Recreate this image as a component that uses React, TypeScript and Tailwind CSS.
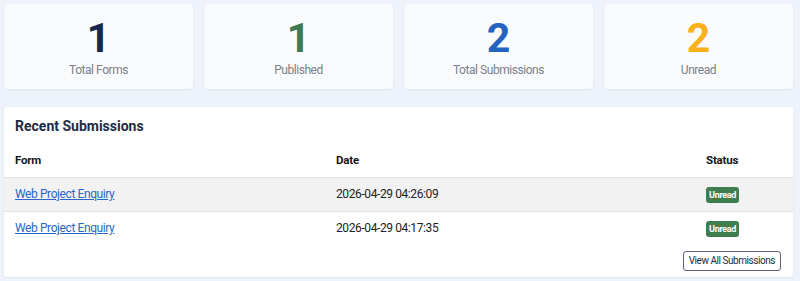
const stats = [
  { value: "1", label: "Total Forms", color: "text-[#14294b]" },
  { value: "1", label: "Published", color: "text-[#3d7a52]" },
  { value: "2", label: "Total Submissions", color: "text-[#2463bf]" },
  { value: "2", label: "Unread", color: "text-[#f9b11b]" },
];

const submissions = [
  { form: "Web Project Enquiry", date: "2026-04-29 04:26:09", status: "Unread" },
  { form: "Web Project Enquiry", date: "2026-04-29 04:17:35", status: "Unread" },
];

export default function App() {
  return (
    <div className="min-h-[281px] bg-[#eef3fb] pl-1 pr-[7px] pt-1 font-['Roboto',sans-serif]">
      {/* Stat cards */}
      <div className="grid grid-cols-4 gap-[11px]">
        {stats.map((s) => (
          <div
            key={s.label}
            className="h-[85px] rounded-[4px] bg-[#fafbfd] pt-[14px] text-center shadow-[0_1px_2px_rgba(30,40,70,0.08)]"
          >
            <div className={`text-[41px] font-bold leading-[40px] ${s.color}`}>{s.value}</div>
            <div className="mt-[4px] text-[12px] leading-4 tracking-[-0.45px] text-[#7b8089]">{s.label}</div>
          </div>
        ))}
      </div>

      {/* Recent submissions */}
      <div className="mt-[18px] h-[170px] rounded-[3px] bg-white pt-[9px] shadow-[0_1px_2px_rgba(30,40,70,0.08)]">
        <h2 className="px-[11px] text-[14px] font-bold leading-5 text-[#1d2b45]">Recent Submissions</h2>
        <table className="mt-[9px] w-full table-fixed border-collapse text-left">
          <colgroup>
            <col className="w-[321px]" />
            <col className="w-[370px]" />
            <col />
          </colgroup>
          <thead>
            <tr className="h-[32px] text-[11.5px] font-bold tracking-[-0.2px] text-[#151515]">
              <th className="pl-[11px]">Form</th>
              <th className="pl-[11px]">Date</th>
              <th className="pl-[11px]">Status</th>
            </tr>
          </thead>
          <tbody>
            {submissions.map((row, i) => (
              <tr
                key={row.date}
                className={`h-[34px] border-t border-[#e3e3e3] text-[12px] tracking-[-0.4px] ${i === 0 ? "bg-[#f2f2f2]" : "bg-white"}`}
              >
                <td className="pl-[11px]">
                  <a href="#" className="text-[#2a66c6] underline">
                    {row.form}
                  </a>
                </td>
                <td className="pl-[11px] text-[#222]">{row.date}</td>
                <td className="pl-[11px]">
                  <span className="inline-block rounded-[3px] bg-[#3d7d4f] px-[3px] text-[9px] font-bold leading-4 tracking-[-0.3px] text-white">
                    {row.status}
                  </span>
                </td>
              </tr>
            ))}
          </tbody>
        </table>
        <div className="mt-[6px] flex justify-end pr-[12px]">
          <button className="h-[20px] rounded-[3px] border border-[#5b6472] bg-white px-[5px] text-[10px] leading-none tracking-[-0.45px] text-[#1f2a44]">
            View All Submissions
          </button>
        </div>
      </div>
    </div>
  );
}
